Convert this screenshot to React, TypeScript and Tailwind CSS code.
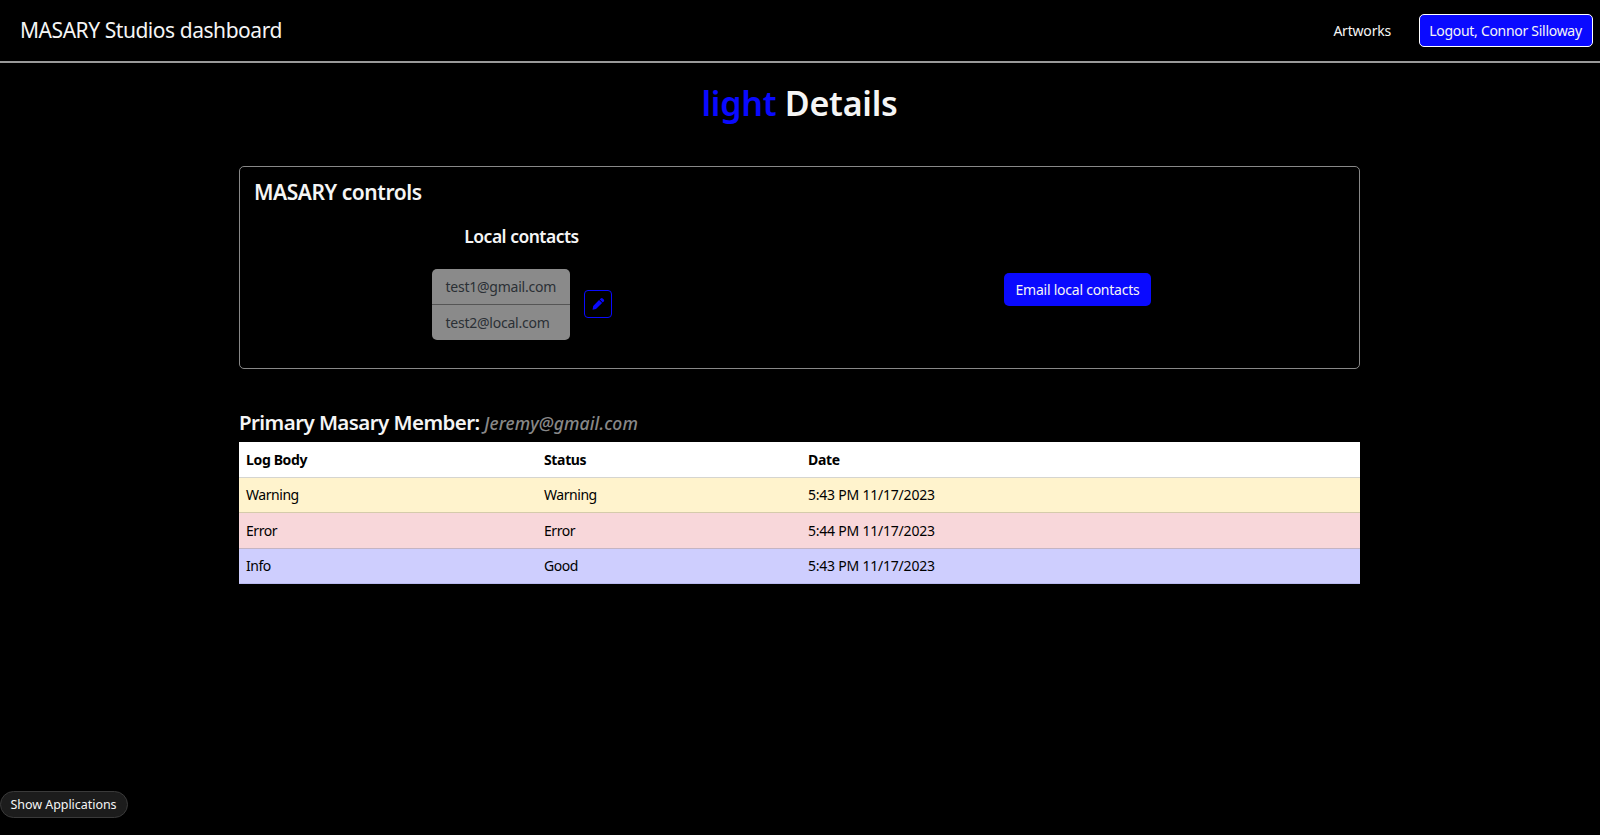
import React from "react";

const rows = [
  { body: "Warning", status: "Warning", date: "5:43 PM 11/17/2023", tone: "h-[35px] bg-[#fff3cd] border-[#d5cbab]" },
  { body: "Error", status: "Error", date: "5:44 PM 11/17/2023", tone: "h-[36px] bg-[#f8d7da] border-[#c4b4c4]" },
  { body: "Info", status: "Good", date: "5:43 PM 11/17/2023", tone: "h-[35px] bg-[#cecefe] border-[#babaf0]" },
];

function PencilIcon() {
  return (
    <svg viewBox="0 0 16 16" className="h-[14px] w-[14px]" fill="currentColor" aria-hidden="true">
      <path d="M11.2 1.6a1.6 1.6 0 0 1 2.2 0l1.2 1.2a1.6 1.6 0 0 1 0 2.2L13.4 6.200 9.900 2.700zM9.200 3.400l3.500 3.500-7 6.900-3.900.8.700-4.300z" />
    </svg>
  );
}

export default function App() {
  return (
    <div className="flex h-[835px] flex-col overflow-hidden bg-black font-['Noto_Sans',sans-serif] text-[14px] leading-[21px] text-[#f5f5f5]">
      <header className="flex h-[63px] shrink-0 items-center justify-between border-b-2 border-[#999] pl-5 pr-[7px]">
        <span className="pb-[2px] text-[21px] leading-[28px] tracking-[-0.45px]">MASARY Studios dashboard</span>
        <nav className="flex items-center">
          <a className="mr-7 tracking-[-0.2px]">Artworks</a>
          <button className="flex h-[33px] w-[174px] items-center justify-center whitespace-nowrap rounded-[5px] border border-white bg-[#0a0aff] pr-px tracking-[-0.29px]">
            Logout, Connor Silloway
          </button>
        </nav>
      </header>

      <main className="ml-[239px] w-[1121px]">
        <h1 className="mt-[19px] text-center text-[34px] font-semibold leading-[42px] tracking-[-0.25px]">
          <span className="text-[#0a0aff]">light</span> Details
        </h1>

        <section className="mt-[42px] flex h-[203px] flex-col rounded-[5px] border border-[#888] px-[14px]">
          <h2 className="mt-[12px] text-[21px] font-semibold leading-[26px] tracking-[-0.45px]">MASARY controls</h2>
          <div className="flex">
            <div className="flex w-[524px] shrink-0 flex-col items-center">
              <h3 className="ml-[11px] mt-[20px] text-[17.5px] font-semibold leading-[22px] tracking-[-0.5px]">Local contacts</h3>
              <div className="ml-[11px] mt-[22px] flex items-center">
                <ul className="w-[138px] overflow-hidden rounded-[5px] bg-[#8a8a8a] tracking-[-0.24px] text-[#2b3035]">
                  <li className="flex h-[36px] items-center border-b border-[#555] px-[14px]">test1@gmail.com</li>
                  <li className="flex h-[35px] items-center px-[14px] pb-px">test2@local.com</li>
                </ul>
                <button className="-mt-px ml-[14px] flex h-[28px] w-[28px] items-center justify-center rounded-[4px] border border-[#0a0aff] text-[#0a0aff]">
                  <PencilIcon />
                </button>
              </div>
            </div>
            <div className="flex w-[567px] flex-col items-center">
              <button className="ml-[32px] mt-[68px] flex h-[33px] w-[147px] items-center justify-center whitespace-nowrap rounded-[5px] bg-[#0a0aff] tracking-[-0.24px]">
                Email local contacts
              </button>
            </div>
          </div>
        </section>

        <h2 className="mt-[40px] text-[20.5px] font-semibold leading-[26px] tracking-[-0.57px]">
          Primary Masary Member: <em className="text-[17.5px] font-medium tracking-[0.1px] text-[#888]">Jeremy@gmail.com</em>
        </h2>

        <table className="mt-[6px] w-full table-fixed border-separate border-spacing-0 text-left tracking-[-0.22px] text-black">
          <colgroup>
            <col className="w-[298px]" />
            <col className="w-[264px]" />
            <col />
          </colgroup>
          <thead>
            <tr className="h-[36px] bg-white tracking-[-0.35px]">
              <th className="border-b border-[#d5d5d0] px-[7px] font-bold">Log Body</th>
              <th className="border-b border-[#d5d5d0] px-[7px] font-bold">Status</th>
              <th className="border-b border-[#d5d5d0] px-[7px] font-bold">Date</th>
            </tr>
          </thead>
          <tbody>
            {rows.map((r) => (
              <tr key={r.body} className={r.tone}>
                <td className="border-b border-inherit px-[7px] pb-px tracking-[-0.45px]">{r.body}</td>
                <td className="border-b border-inherit px-[7px] pb-px tracking-[-0.45px]">{r.status}</td>
                <td className="border-b border-inherit px-[7px] pb-px">{r.date}</td>
              </tr>
            ))}
          </tbody>
        </table>
      </main>

      <div className="mb-[17px] mt-auto flex h-[27px] w-[128px] items-center justify-center rounded-full border border-[#3a3a3a] bg-[#1c1c1c] pr-px text-[12.5px] tracking-[-0.04px]">
        Show Applications
      </div>
    </div>
  );
}
